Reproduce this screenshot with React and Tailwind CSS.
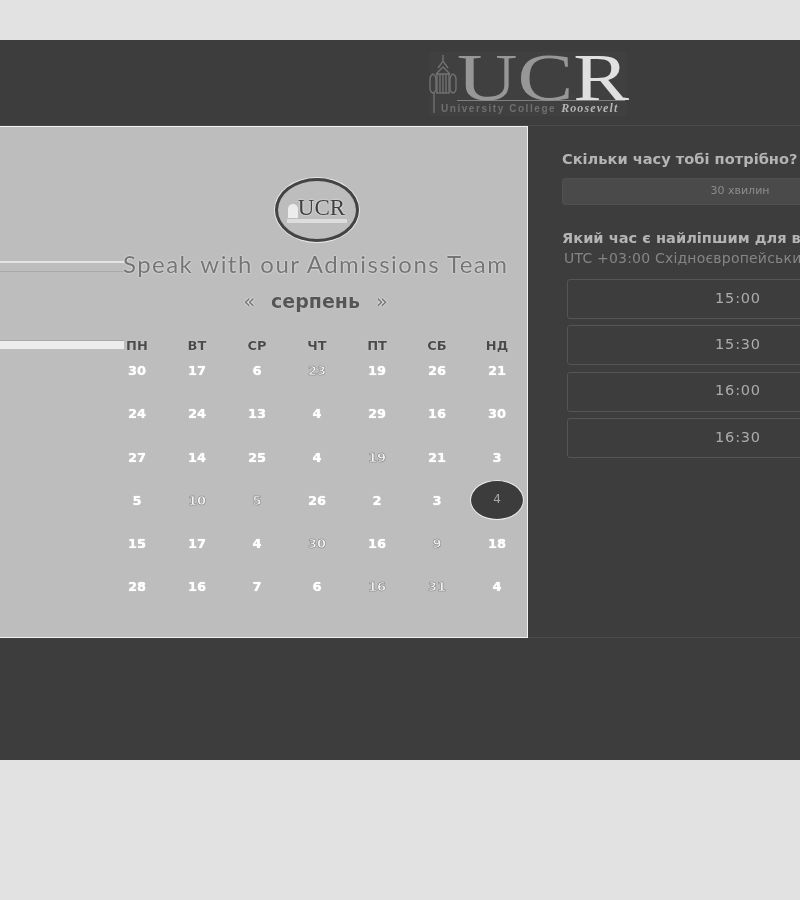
import React from 'react';

const dayNames = ['пн', 'вт', 'ср', 'чт', 'пт', 'сб', 'нд'];

// thin: true draws the number as the pale outlined kind
const weeks = [
  [['30'], ['17'], ['6'], ['23', true], ['19'], ['26'], ['21']],
  [['24'], ['24'], ['13'], ['4'], ['29'], ['16'], ['30']],
  [['27'], ['14'], ['25'], ['4'], ['19', true], ['21'], ['3']],
  [['5'], ['10', true], ['5', true], ['26'], ['2'], ['3'], ['4', false, true]],
  [['15'], ['17'], ['4'], ['30', true], ['16'], ['9', true], ['18']],
  [['28'], ['16'], ['7'], ['6'], ['16', true], ['31', true], ['4']],
];

const slots = ['15:00', '15:30', '16:00', '16:30'];

function TowerIcon() {
  return (
    <svg width="26" height="58" viewBox="0 0 26 58" fill="none" stroke="#747474" strokeWidth="1.3" className="shrink-0 overflow-visible">
      <path d="M13 0v7M8 13l5-7 5 7M6 19l7-7 7 7M6 19h14M7 19v19M19 19v19M13 19v19M10 19v19M16 19v19" />
      <path d="M3 19c-2 1-3 3-3 5v10c0 2 2 4 3 4s3-2 3-4V24c0-2-1-4-3-5zM23 19c2 1 3 3 3 5v10c0 2-2 4-3 4s-3-2-3-4V24c0-2 1-4 3-5z" />
      <path d="M6 38h14" />
      <path d="M4 38v20" />
    </svg>
  );
}

function Logo() {
  return (
    <div className="flex h-[64px] w-[196px] flex-col bg-[#404040] pt-[3px]">
      <div className="flex h-[45px] items-start">
        <TowerIcon />
        <div className="ml-[1px] origin-left scale-x-[1.23] font-['Liberation_Serif',serif] text-[68px] leading-[44px] whitespace-nowrap text-[#979797]">
          UC<span className="text-[#e0e0e0]">R</span>
        </div>
      </div>
      <div className="ml-[27px] h-px w-[168px] bg-[#808080]" />
      <div className="flex items-baseline gap-[5px] pt-[1px] pl-[11px] whitespace-nowrap">
        <span className="font-['Liberation_Sans',sans-serif] text-[10px] leading-[12px] font-bold tracking-[1.55px] text-[#6f6f6f]">University College</span>
        <span className="font-['Liberation_Serif',serif] text-[12px] leading-[12px] font-bold tracking-[1.1px] text-[#b4b4b4] italic">Roosevelt</span>
      </div>
    </div>
  );
}

function Badge() {
  return (
    <div className="flex h-[64px] w-[84px] flex-col items-center justify-center rounded-[50%] border-[3px] border-[#444444] shadow-[0_0_0_1px_#e8e8e8]">
      <div className="flex items-end">
        <div className="mb-[1px] h-[14px] w-[10px] rounded-t-[5px] bg-[#ececec]" />
        <span className="font-['Liberation_Serif',serif] text-[23px] leading-[22px] font-normal text-[#3f3f3f] [text-shadow:0_0_2px_#ffffff]">UCR</span>
      </div>
      <div className="h-[4px] w-[60px] bg-[#dddddd]" />
    </div>
  );
}

function DayCell({ value, thin, selected }) {
  if (selected) {
    return (
      <div className="flex h-[43.3px] justify-center">
        <div className="mt-[-13px] flex h-[40px] w-[54px] items-center justify-center rounded-[50%] border border-[#eeeeee] bg-[#3c3c3c] pb-[2px] text-[12px] font-normal text-[#a8a8a8]">
          {value}
        </div>
      </div>
    );
  }
  return (
    <div
      className={
        thin
          ? "flex h-[43.3px] justify-center text-[13px] leading-[16px] font-bold text-[#f2f2f2] [-webkit-text-stroke:0.5px_#777777]"
          : "flex h-[43.3px] justify-center text-[13px] leading-[16px] font-bold text-white [text-shadow:0_0_1px_#ffffff]"
      }
    >
      {value}
    </div>
  );
}

function CalendarPanel() {
  return (
    <section className="flex h-[512px] w-[528px] shrink-0 border border-l-0 border-[#f2f2f2] bg-[#bdbdbd]">
      {/* leftover field rails that run under the calendar */}
      <div className="flex w-[124px] shrink-0 flex-col">
        <div className="mt-[134px] h-[2px] bg-[#e4e4e4]" />
        <div className="mt-[8px] h-px bg-[#a9a9a9]" />
        <div className="mt-[68px] h-px bg-[#a9a9a9]" />
        <div className="h-[8px] bg-[#ececec]" />
      </div>
      <div className="flex min-w-0 flex-1 flex-col font-['DejaVu_Sans',sans-serif]">
        <div className="flex justify-center pt-[51px]">
          <div className="mr-[18px]">
            <Badge />
          </div>
        </div>
        <h1 className="mt-[8px] ml-[-1px] font-['Lato',sans-serif] text-[24px] leading-[28px] font-normal tracking-[1.45px] whitespace-nowrap text-[#757575] [text-shadow:0_0_2px_#ffffff]">
          Speak with our Admissions Team
        </h1>
        <div className="mt-[11px] flex items-center justify-center gap-[16px] pr-[20px]">
          <span className="text-[19px] leading-[24px] text-[#777777] [text-shadow:0_0_2px_#ffffff]">«</span>
          <span className="text-[19px] leading-[24px] font-bold text-[#555555] [text-shadow:0_0_1px_#eeeeee]">серпень</span>
          <span className="text-[19px] leading-[24px] text-[#777777] [text-shadow:0_0_2px_#ffffff]">»</span>
        </div>
        <div className="mt-[24px] ml-[-17px] grid w-[420px] grid-cols-7">
          {dayNames.map((d) => (
            <div key={d} className="flex h-[18px] items-center justify-center text-[13px] font-bold text-[#4a4a4a] uppercase [text-shadow:0_0_1px_#ffffff]">
              {d}
            </div>
          ))}
          <div className="col-span-7 h-[8px]" />
          {weeks.flat().map(([value, thin, selected], i) => (
            <DayCell key={i} value={value} thin={thin} selected={selected} />
          ))}
        </div>
      </div>
    </section>
  );
}

function TimePanel() {
  return (
    <section className="w-[400px] shrink-0 pt-[23px] pl-[34px] font-['DejaVu_Sans',sans-serif]">
      <h2 className="text-[14.6px] leading-[20px] font-bold whitespace-nowrap text-[#b4b4b4]">Скільки часу тобі потрібно?</h2>
      <div className="mt-[9px] flex h-[27px] w-[356px] items-center justify-center rounded-[3px] border border-[#505050] bg-[#4a4a4a] text-[11px] text-[#8c8c8c]">
        30 хвилин
      </div>
      <h2 className="mt-[23px] text-[14.6px] leading-[20px] font-bold whitespace-nowrap text-[#b4b4b4]">Який час є найліпшим для вас?</h2>
      <p className="ml-[2px] text-[14px] leading-[20px] tracking-[0.2px] whitespace-nowrap text-[#858585]">UTC +03:00 Східноєвропейський час</p>
      <div className="mt-[11px] ml-[5px] flex w-[342px] flex-col gap-[6.4px]">
        {slots.map((s) => (
          <div key={s} className="flex h-[40px] items-center justify-center rounded-[3px] border border-[#555555] pb-[1px] text-[14.5px] tracking-[0.8px] text-[#acacac]">
            {s}
          </div>
        ))}
      </div>
    </section>
  );
}

export default function App() {
  return (
    <div className="flex h-[900px] w-[800px] flex-col overflow-hidden bg-[#e2e2e2] grayscale">
      <div className="mt-[40px] flex h-[720px] flex-col bg-[#3d3d3d]">
        <header className="h-[86px] shrink-0 border-b border-[#4a4a4a] pt-[12px] pl-[430px]">
          <Logo />
        </header>
        <main className="flex h-[512px] shrink-0 border-b border-[#4a4a4a]">
          <CalendarPanel />
          <TimePanel />
        </main>
      </div>
    </div>
  );
}
